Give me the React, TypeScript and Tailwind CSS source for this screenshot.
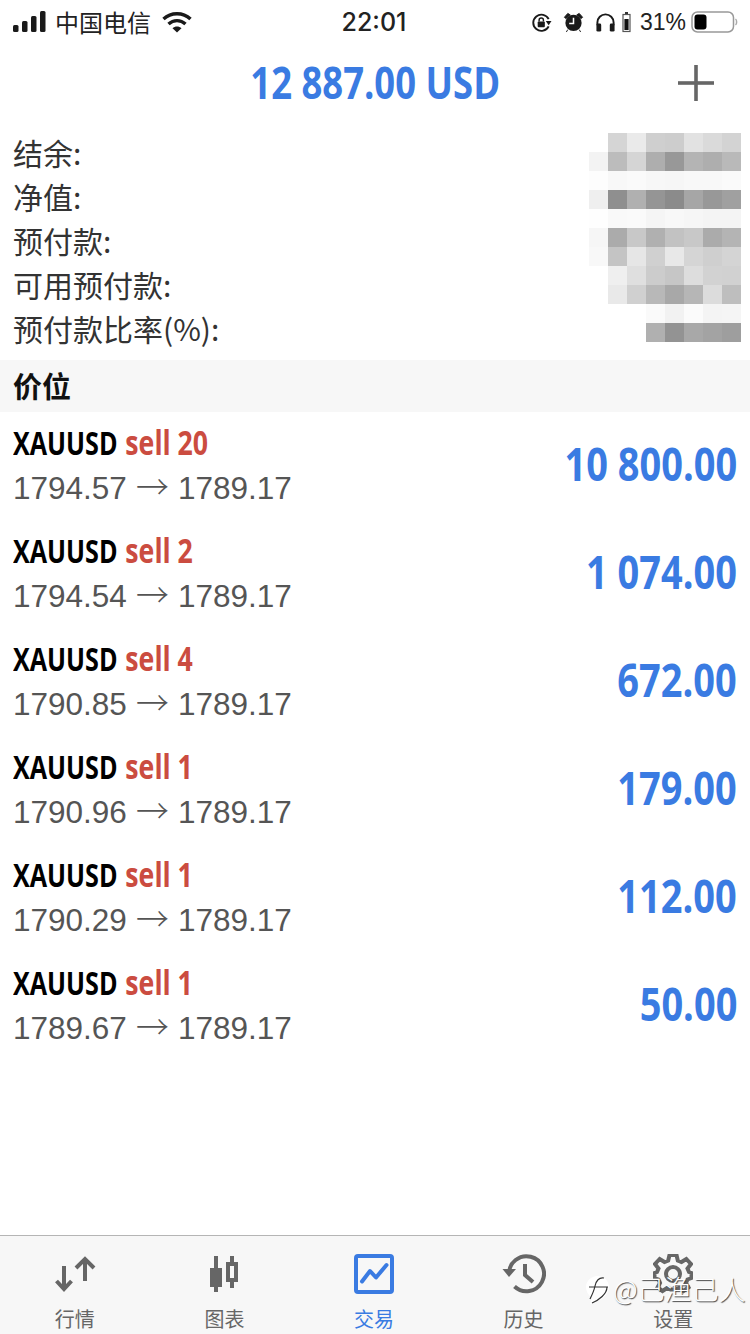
const CJK = '[font-family:"Noto_Sans_CJK_SC","Noto_Sans",sans-serif]';

const mosaic: (string | null)[][] = [
  [null, "#d5d5d5", "#eaeaea", "#cfcfcf", "#cdcdcd", "#e2e2e2", "#dadada", "#d3d3d3"],
  ["#f3f3f3", "#bcbcbc", "#d5d5d5", "#aeaeae", "#989898", "#b4b4b4", "#aeaeae", "#b9b9b9"],
  ["#fdfdfd", "#f8f8f8", "#fafafa", "#f7f7f7", "#f6f6f6", "#f8f8f8", "#f8f8f8", "#fafafa"],
  ["#efefef", "#8f8f8f", "#b0b0b0", "#959595", "#8b8b8b", "#a6a6a6", "#989898", "#a0a0a0"],
  ["#fefefe", "#f9f9f9", "#fafafa", "#f5f5f5", "#f8f8f8", "#f6f6f6", "#f4f4f4", "#f4f4f4"],
  ["#f6f6f6", "#ababab", "#c8c8c8", "#b0b0b0", "#c2c2c2", "#c8c8c8", "#ababab", "#b4b4b4"],
  ["#f8f8f8", "#c4c4c4", "#e6e6e6", "#d0d0d0", "#e8e8e8", "#d5d5d5", "#cfcfcf", "#d4d4d4"],
  [null, "#efefef", "#dfdfdf", "#cccccc", "#c6c6c6", "#dddddd", "#d2d2d2", "#d1d1d1"],
  [null, "#e9e9e9", "#d0d0d0", "#b8b8b8", "#a8a8a8", "#b6b6b6", "#dcdcdc", "#bebebe"],
  [null, null, null, "#fafafa", "#f2f2f2", "#fbfbfb", "#f4f4f4", "#f5f5f5"],
  [null, null, null, "#b0b0b0", "#939393", "#a8a8a8", "#a3a3a3", "#9e9e9e"],
];

const labels = ["结余:", "净值:", "预付款:", "可用预付款:", "预付款比率(%):"];

const trades = [
  { lots: "20", from: "1794.57", profit: "10 800.00" },
  { lots: "2", from: "1794.54", profit: "1 074.00" },
  { lots: "4", from: "1790.85", profit: "672.00" },
  { lots: "1", from: "1790.96", profit: "179.00" },
  { lots: "1", from: "1790.29", profit: "112.00" },
  { lots: "1", from: "1789.67", profit: "50.00" },
];

function StatusBar() {
  return (
    <div className={`flex h-[44px] items-center justify-between pl-[13px] pr-[12px] text-[#222] ${CJK}`}>
      <div className="flex w-[240px] items-center">
        <svg width="34" height="22" viewBox="0 0 34 22" fill="#1a1a1a">
          <rect x="0" y="14" width="5.5" height="7" rx="1.5" />
          <rect x="9" y="10" width="5.5" height="11" rx="1.5" />
          <rect x="18" y="5" width="5.5" height="16" rx="1.5" />
          <rect x="27" y="0" width="5.5" height="21" rx="1.5" />
        </svg>
        <span className="ml-[8px] text-[24px] leading-none">中国电信</span>
        <svg className="ml-[11px]" width="30" height="22" viewBox="0 0 30 22" fill="none" stroke="#1a1a1a" strokeWidth="3.4">
          <path d="M1.5 8 C9 1 21 1 28.5 8" />
          <path d="M6.5 13 C11.5 8.5 18.5 8.5 23.5 13" />
          <path d="M15 21.5 L10.5 17.2 C13 15 17 15 19.5 17.2 Z" fill="#1a1a1a" stroke="none" />
        </svg>
      </div>
      <span className="mr-[3px] text-[25px] font-medium leading-none [font-family:Inter,sans-serif]">22:01</span>
      <div className="flex w-[240px] items-center justify-end">
        <svg width="21" height="21" viewBox="0 0 22 22" fill="none" stroke="#1a1a1a" strokeWidth="2">
          <path d="M18.5 7.5 A8.5 8.5 0 1 0 18.5 15" />
          <path d="M15.5 9.5 L21.5 9.5 L18.5 14 Z" fill="#1a1a1a" stroke="none" />
          <rect x="7" y="10" width="7.5" height="6" rx="1" fill="#1a1a1a" stroke="none" />
          <path d="M8.5 10 V8.5 A2.2 2.2 0 0 1 13 8.5 V10" strokeWidth="1.5" />
        </svg>
        <svg className="ml-[11px]" width="21" height="22" viewBox="0 0 22 22">
          <circle cx="11" cy="12" r="8.5" fill="#1a1a1a" />
          <path d="M11 6.5 V12.5 H6.5" fill="none" stroke="#fff" strokeWidth="1.6" />
          <path d="M1.5 6 L5 2 L7.5 3.5 L3 7.5 Z M20.5 6 L17 2 L14.5 3.5 L19 7.5 Z M5 19 L3.5 21.5 M17 19 L18.5 21.5" fill="#1a1a1a" stroke="#1a1a1a" strokeWidth="1" />
        </svg>
        <svg className="ml-[11px]" width="21" height="21" viewBox="0 0 22 22" fill="none">
          <path d="M2.5 14 V11 A8.5 8.5 0 0 1 19.5 11 V14" stroke="#1a1a1a" strokeWidth="2" />
          <rect x="1.5" y="12" width="5" height="8.5" rx="1.5" fill="#1a1a1a" />
          <rect x="15.5" y="12" width="5" height="8.5" rx="1.5" fill="#1a1a1a" />
        </svg>
        <svg className="ml-[6px]" width="9" height="22" viewBox="0 0 9 22" fill="none">
          <rect x="3" y="1" width="3" height="2" fill="#333" />
          <rect x="1" y="3.5" width="7" height="17" stroke="#555" strokeWidth="1.2" />
          <rect x="2.4" y="8" width="4.2" height="11" fill="#111" />
        </svg>
        <span className="ml-[9px] text-[23px] leading-none [font-family:Liberation_Sans,sans-serif]">31%</span>
        <svg className="ml-[5px]" width="47" height="22" viewBox="0 0 47 22" fill="none">
          <rect x="1" y="1" width="41.5" height="20" rx="5.5" stroke="#999" strokeWidth="1.5" />
          <rect x="3.5" y="3.5" width="12" height="15" rx="3" fill="#000" />
          <path d="M44.5 8 C46 9 46 13 44.5 14" stroke="#aaa" strokeWidth="1.5" />
        </svg>
      </div>
    </div>
  );
}

function Header() {
  return (
    <div className="relative flex h-[78px] items-start justify-center">
      <span className="mt-[13px] inline-block scale-x-[0.81] whitespace-nowrap text-[45px] font-bold leading-[50px] text-[#3a7be2] [font-family:'Open_Sans',sans-serif]">
        12 887.00 USD
      </span>
      <svg className="absolute right-[36px] top-[21px]" width="36" height="36" viewBox="0 0 36 36" fill="#666">
        <rect x="16.2" y="0" width="3.6" height="36" />
        <rect x="0" y="16.2" width="36" height="3.6" />
      </svg>
    </div>
  );
}

function Summary() {
  return (
    <div className="flex h-[238px] justify-between pl-[13px] pr-[9px]">
      <div className={`flex flex-col pt-[8px] text-[30px] leading-[44px] text-[#333] ${CJK}`}>
        {labels.map((l) => (
          <div key={l} className="h-[44px] whitespace-nowrap">{l}</div>
        ))}
      </div>
      <div className="mt-[11px] grid h-[209px] grid-cols-[repeat(8,19px)] grid-rows-[repeat(11,19px)]">
        {mosaic.flat().map((c, i) => (
          <div key={i} style={{ backgroundColor: c ?? "transparent" }} />
        ))}
      </div>
    </div>
  );
}

function TradeRow({ lots, from, profit }: { lots: string; from: string; profit: string }) {
  return (
    <div className="flex h-[108px] items-start justify-between pl-[13px] pr-[13px]">
      <div className="flex flex-col">
        <div className="mt-[10px] flex h-[40px] origin-left scale-x-[0.785] items-baseline whitespace-nowrap text-[32px] font-bold leading-[40px] [font-family:'Open_Sans',sans-serif]">
          <span className="text-black">XAUUSD</span>
          <span className="ml-[10px] text-[34px] text-[#cb4c40]">sell {lots}</span>
        </div>
        <div className="mt-[4px] flex items-baseline whitespace-nowrap text-[31.5px] leading-[38px] text-[#555] [font-family:'Liberation_Sans',sans-serif]">
          {from}
          <span className={`mx-[9px] text-[33px] font-light leading-[38px] ${CJK}`}>→</span>
          1789.17
        </div>
      </div>
      <div className="mt-[25px] origin-right scale-x-[0.825] whitespace-nowrap text-[46px] font-bold leading-[52px] text-[#3a7be2] [font-family:'Open_Sans',sans-serif]">
        {profit}
      </div>
    </div>
  );
}

function TabItem({ label, active, children }: { label: string; active?: boolean; children: React.ReactNode }) {
  return (
    <div className="flex flex-col items-center">
      <div className="flex h-[44px] w-[50px] items-center justify-center">{children}</div>
      <span className={`mt-[10px] text-[20px] leading-[26px] ${active ? "text-[#3a7be2]" : "text-[#666]"}`}>{label}</span>
    </div>
  );
}

function TabBar() {
  return (
    <div className={`grid h-[99px] grid-cols-5 border-t border-[#b5b5b5] bg-[#f7f7f7] pr-[2px] pt-[16px] ${CJK}`}>
      <TabItem label="行情">
        <svg width="42" height="36" viewBox="0 0 42 36" fill="none" stroke="#666" strokeWidth="4">
          <path d="M10 10 V33 M2.5 25 L10 33 L17.5 25" />
          <path d="M31 25 V3 M22 12 L31 3 L40 12" />
        </svg>
      </TabItem>
      <TabItem label="图表">
        <svg width="28" height="36" viewBox="0 0 28 36" fill="#666">
          <rect x="4" y="0" width="4" height="36" />
          <rect x="0" y="12" width="12" height="19" />
          <rect x="20" y="0" width="4" height="6" />
          <rect x="20" y="26" width="4" height="6" />
          <path d="M16 6 H28 V26 H16 Z M20 10 V22 H24 V10 Z" fillRule="evenodd" />
        </svg>
      </TabItem>
      <TabItem label="交易" active>
        <svg width="40" height="40" viewBox="0 0 40 40" fill="none" stroke="#3a7be2" strokeLinecap="round" strokeLinejoin="round">
          <rect x="2" y="2" width="36" height="36" rx="2" strokeWidth="4" />
          <path d="M8 27.5 L16 17 L22 23.5 L32.5 11" strokeWidth="4" />
        </svg>
      </TabItem>
      <TabItem label="历史">
        <svg width="44" height="40" viewBox="0 0 44 40" fill="none" stroke="#666" strokeWidth="4">
          <path d="M7 20 A17.5 17.5 0 1 1 12.5 32.5" />
          <path d="M0.5 15 H14 L7 23 Z" fill="#666" stroke="none" />
          <path d="M23 10 V21 L31 28" />
        </svg>
      </TabItem>
      <TabItem label="设置">
        <svg width="40" height="40" viewBox="0 0 40 40" fill="none" stroke="#666" strokeWidth="4">
          <path d="M16.5 2 H23.5 L24.8 7.5 L28.5 9 L33.3 6 L38 11 L34.5 15.5 L36 19 L38.5 20 V25 L34.5 26.5 L33 30 L35.5 34.5 L30.5 38 L26 35 L22.5 36.5 H17.5 L14 35 L9.5 38 L4.5 34.5 L7 30 L5.5 26.5 L1.5 25 V20 L4 19 L5.5 15.5 L2 11 L6.7 6 L11.5 9 L15.2 7.5 Z" transform="translate(0 -1)" />
          <circle cx="20" cy="20" r="7" />
        </svg>
      </TabItem>
    </div>
  );
}

export default function App() {
  return (
    <div className="relative flex h-[1334px] w-[750px] flex-col overflow-hidden bg-white">
      <StatusBar />
      <Header />
      <Summary />
      <div className={`flex h-[52px] items-start bg-[#f7f7f7] pl-[13px] pt-[9px] text-[29px] font-bold leading-[32px] text-[#111] ${CJK}`}>价位</div>
      <div className="flex-1">
        {trades.map((t, i) => (
          <TradeRow key={i} {...t} />
        ))}
      </div>
      <TabBar />
      <div className={`absolute left-[585px] top-[1272px] flex items-center whitespace-nowrap text-[27px] font-light leading-[28px] text-white [text-shadow:1px_1px_1px_#444] ${CJK}`}>
        <svg width="26" height="34" viewBox="0 0 26 34" fill="none">
          <path d="M12.5 4 C19 4 24 9 24 15 C24 24 14 30 5 32 L7 26 C3 23 1 19 1 15 C1 9 6 4 12.5 4 Z" fill="#fff" />
          <path d="M19 6 C14 5 11 9 10 14 C9 19 7 23 5 27 M4 15 H23 M22 15 C22 22 14 28 7 31" stroke="#333" strokeWidth="1.2" />
        </svg>
        <span className="ml-[2px]">@己渔己人</span>
      </div>
    </div>
  );
}
